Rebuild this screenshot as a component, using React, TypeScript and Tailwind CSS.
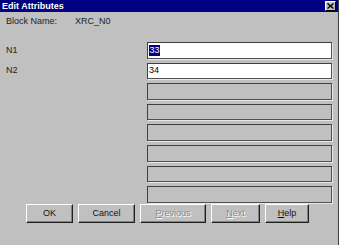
import React from 'react'

const font = { fontFamily: '"Liberation Sans", Arial, sans-serif' }

function Field({ value, selected }: { value?: string; selected?: boolean }) {
  const empty = value === undefined
  return (
    <div
      className={`h-[16.6px] w-[185px] border border-t-[#404040] border-l-[#404040] border-b-[#505050] border-r-[#505050] shadow-[1px_1px_0_#e8e8e8] flex items-center pl-[1px] text-[9px] text-black ${
        empty ? 'bg-[#c0c0c0]' : 'bg-white'
      }`}
    >
      {selected ? <span className="bg-[#000080] text-white leading-[11px] px-[0.5px]">{value}</span> : value}
    </div>
  )
}

function Btn({
  children,
  width,
  disabled,
}: {
  children: React.ReactNode
  width: string
  disabled?: boolean
}) {
  return (
    <div
      className={`${width} h-[19px] bg-[#c0c0c0] border-t border-l border-t-white border-l-white border-b border-r border-b-[#202020] border-r-[#202020] shadow-[inset_-1px_-1px_0_#808080] flex items-center justify-center text-[9px] ${
        disabled ? 'text-[#8a8a8a] [text-shadow:1px_1px_0_#ffffff]' : 'text-[#111]'
      }`}
    >
      {children}
    </div>
  )
}

export default function App() {
  return (
    <div
      className="w-[339px] h-[245px] bg-[#c0c0c0] border-r border-r-[#404040] flex flex-col overflow-hidden"
      style={font}
    >
      <div className="h-[12px] bg-[#000080] flex items-center justify-between pl-[2px] pr-[2px]">
        <span className="text-white text-[9px] font-bold leading-none">Edit Attributes</span>
        <div className="w-[11px] h-[10px] bg-[#c0c0c0] border-t border-l border-t-white border-l-white border-b border-r border-b-black border-r-black flex items-center justify-center">
          <svg width="7" height="6" viewBox="0 0 7 6">
            <path d="M0.5 0.5 L6.5 5.5 M6.5 0.5 L0.5 5.5" stroke="#000" strokeWidth="1.4" />
          </svg>
        </div>
      </div>

      <div className="flex text-[9px] text-[#222] pl-[6px] mt-[5px] h-[10px] items-center">
        <span className="w-[69px]">Block Name:</span>
        <span>XRC_N0</span>
      </div>

      <div className="flex mt-[15px]">
        <div className="w-[147px] pl-[6px] flex flex-col gap-[4px] text-[9px] text-[#222]">
          <div className="h-[16.6px] flex items-center">N1</div>
          <div className="h-[16.6px] flex items-center">N2</div>
        </div>
        <div className="flex flex-col gap-[4px]">
          <Field value="33" selected />
          <Field value="34" />
          <Field />
          <Field />
          <Field />
          <Field />
          <Field />
          <Field />
        </div>
      </div>

      <div className="flex pl-[26px] mt-[1.4px] gap-[5px]">
        <Btn width="w-[47px]">OK</Btn>
        <Btn width="w-[57px]">Cancel</Btn>
        <Btn width="w-[66px]" disabled>
          <span>
            <span className="underline">P</span>revious
          </span>
        </Btn>
        <Btn width="w-[49px]" disabled>
          <span>
            <span className="underline">N</span>ext
          </span>
        </Btn>
        <Btn width="w-[44px]">
          <span>
            <span className="underline">H</span>elp
          </span>
        </Btn>
      </div>
    </div>
  )
}
